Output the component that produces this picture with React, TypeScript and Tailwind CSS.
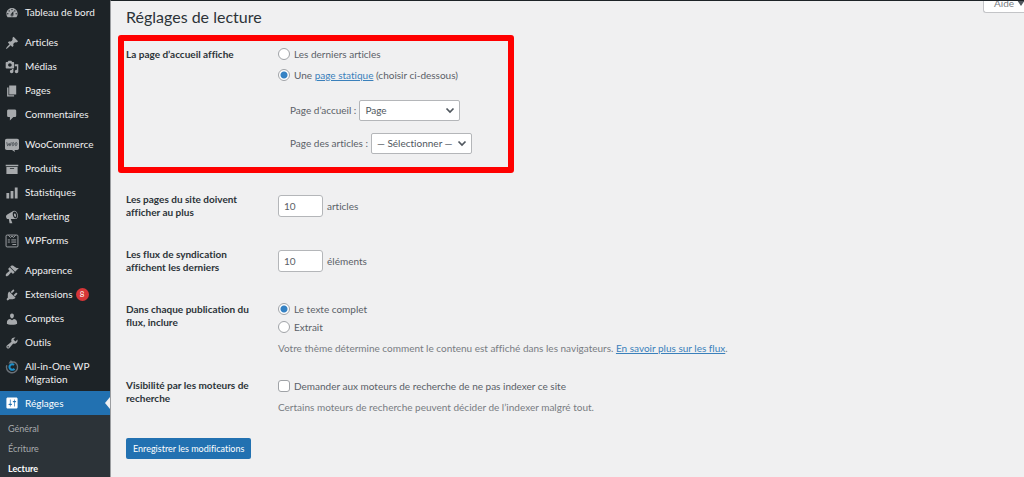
import type { ReactNode } from "react";

const icons: Record<string, ReactNode> = {
  dashboard: (
    <path d="M3.76 16h12.48c1.1-1.37 1.76-3.11 1.76-5 0-4.42-3.58-8-8-8s-8 3.58-8 8c0 1.89.66 3.63 1.76 5zM10 4c.55 0 1 .45 1 1s-.45 1-1 1-1-.45-1-1 .45-1 1-1zM6 6c.55 0 1 .45 1 1s-.45 1-1 1-1-.45-1-1 .45-1 1-1zm8 0c.55 0 1 .45 1 1s-.45 1-1 1-1-.45-1-1 .45-1 1-1zm-5.37 5.55L12 7v6c0 1.1-.9 2-2 2s-2-.9-2-2c0-.57.24-1.08.63-1.45zM4 10c.55 0 1 .45 1 1s-.45 1-1 1-1-.45-1-1 .45-1 1-1zm12 0c.55 0 1 .45 1 1s-.45 1-1 1-1-.45-1-1 .45-1 1-1zm-5 3c0-.55-.45-1-1-1s-1 .45-1 1 .45 1 1 1 1-.45 1-1z" />
  ),
  post: (
    <path d="M10.44 3.02l1.82-1.82 6.36 6.35-1.83 1.82c-1.05-.68-2.48-.57-3.41.36l-.75.75c-.92.93-1.04 2.35-.35 3.41l-1.83 1.82-2.41-2.41-2.8 2.79c-.42.42-3.38 2.71-3.8 2.29s1.86-3.39 2.28-3.81l2.79-2.79L4.1 9.36l1.83-1.82c1.05.69 2.48.57 3.4-.36l.75-.75c.93-.92 1.05-2.35.36-3.41z" />
  ),
  media: (
    <path d="M13 11V4c0-.55-.45-1-1-1h-1.67L9 1H5L3.67 3H2c-.55 0-1 .45-1 1v7c0 .55.45 1 1 1h10c.55 0 1-.45 1-1zM7 4.5c1.38 0 2.5 1.12 2.5 2.5S8.38 9.5 7 9.5 4.5 8.38 4.5 7 5.62 4.5 7 4.5zM14 6h5v10.5c0 1.38-1.12 2.5-2.5 2.5S14 17.88 14 16.5s1.12-2.5 2.5-2.5c.17 0 .34.02.5.05V9h-3V6zm-4 8.05V13h2v3.5c0 1.38-1.12 2.5-2.5 2.5S7 17.88 7 16.5 8.12 14 9.5 14c.17 0 .34.02.5.05z" />
  ),
  page: <path d="M6 15V2h10v13H6zm-1 1h8v2H3V5h2v11z" />,
  comments: (
    <path d="M5 2h9c1.1 0 2 .9 2 2v7c0 1.1-.9 2-2 2h-2l-5 5v-5H5c-1.1 0-2-.9-2-2V4c0-1.1.9-2 2-2z" />
  ),
  woo: (
    <>
      <path d="M2.5 1h15C18.900 1 20 2.100 20 3.500v11c0 1.400-1.100 2.500-2.500 2.500H13.500l.8 3-4.300-3H2.500C1.100 17 0 15.900 0 14.500v-11C0 2.100 1.100 1 2.500 1z" />
      <g fill="none" stroke="#50565c" strokeWidth="1.300" strokeLinejoin="round">
        <path d="M2.500 6l1.200 5.500L6 7.500l1 4L9 6" />
        <ellipse cx="11.500" cy="8.700" rx="1.300" ry="2.400" transform="rotate(12 11.500 8.700)" />
        <ellipse cx="15.800" cy="8.700" rx="1.300" ry="2.400" transform="rotate(12 15.800 8.700)" />
      </g>
    </>
  ),
  archive: <path d="M19 4v2H1V4h18zM2 7h16v10H2V7zm11 3V9H7v1h6z" />,
  chart: <path d="M18 18V2h-4v16h4zm-6 0V7H8v11h4zm-6 0v-8H2v8h4z" />,
  megaphone: (
    <>
      <path d="M18.15 5.94c.46 1.62.38 3.22-.02 4.48-.42 1.28-1.26 2.18-2.3 2.48-.16.06-.26.06-.4.06-.06.02-.12.02-.18.02-.06.02-.14.02-.22.02h-6.8l2.22 5.5c.02.14-.06.26-.14.34-.08.1-.24.16-.34.16H6.95c-.1 0-.26-.06-.34-.16-.08-.08-.16-.2-.14-.34l-1-5.5H4.25l-.02-.02c-.5.06-1.08-.18-1.54-.62s-.88-1.08-1.06-1.88c-.24-.8-.2-1.56-.02-2.2.18-.62.58-1.08 1.06-1.3l.02-.02 9-5.4c.1-.06.18-.1.24-.16.06-.04.14-.08.24-.12.16-.08.28-.12.5-.18 1.04-.3 2.24.1 3.22.98s1.84 2.24 2.26 3.86zm-2.58 5.98h-.02c.4-.1.74-.34 1.04-.7.58-.7.86-1.76.86-3.04 0-.64-.1-1.3-.28-1.98-.34-1.36-1.02-2.5-1.78-3.24s-1.68-1.1-2.46-.88c-.82.22-1.4.96-1.7 2-.32 1.04-.28 2.36.06 3.72.38 1.36 1 2.5 1.8 3.24.78.74 1.62 1.1 2.48.88z" />
      <ellipse cx="14.300" cy="7.500" rx="1.400" ry="2.500" transform="rotate(-15 14.300 7.500)" />
    </>
  ),
  forms: (
    <g fill="none" stroke="currentColor" strokeWidth="1.300">
      <rect x="1.500" y="1.500" width="17" height="17" rx="1.500" />
      <path d="M5 2l3 3 2-2 2 2 3-3M4 8.500h3M9 8.500h7M4 11.500h3M9 11.500h7M10.500 15h5.500" />
    </g>
  ),
  appearance: (
    <path d="M14.48 11.06L7.41 3.99l1.5-1.5c.5-.56 2.3-.47 3.51.32 1.21.8 1.43 1.28 2.91 2.1 1.18.64 2.45 1.26 4.45.85zm-.71.71L6.7 4.7 4.93 6.47c-.39.39-.39 1.02 0 1.41l1.06 1.06c.39.39.39 1.03 0 1.42-.6.6-1.43 1.11-2.21 1.69-.35.26-.7.53-1.01.84C1.43 14.23.4 16.08 1.4 17.07c.99 1 2.84-.03 4.18-1.36.31-.31.58-.66.85-1.02.57-.78 1.08-1.61 1.69-2.21.39-.39 1.02-.39 1.41 0l1.06 1.06c.39.39 1.02.39 1.41 0z" />
  ),
  plugins: (
    <path d="M13.11 4.36L9.87 7.6 8 5.73l3.24-3.24c.35-.34 1.05-.2 1.56.32.52.51.66 1.21.31 1.55zm-8 1.77l.91-1.12 9.01 9.01-1.19.84c-.71.71-2.63 1.16-3.82 1.16H6.14L4.9 17.26c-.59.59-1.54.59-2.12 0-.59-.58-.59-1.53 0-2.12l1.24-1.24v-3.88c0-1.13.4-3.19 1.09-3.89zm7.26 3.97l3.24-3.24c.34-.35 1.04-.21 1.55.31.52.51.66 1.21.31 1.55l-3.24 3.25z" />
  ),
  users: (
    <path d="M10 9.25c-2.27 0-2.73-3.44-2.73-3.44C7 4.02 7.82 2 9.97 2c2.16 0 2.98 2.02 2.71 3.81 0 0-.41 3.44-2.68 3.44zm0 2.57L12.72 10c2.39 0 4.52 2.33 4.52 4.53v2.49s-3.65 1.13-7.24 1.13c-3.65 0-7.24-1.13-7.24-1.13v-2.49c0-2.25 1.94-4.48 4.47-4.48z" />
  ),
  tools: (
    <path d="M16.68 9.77c-1.34 1.34-3.3 1.67-4.95.99l-5.41 6.52c-.99.99-2.59.99-3.58 0s-.99-2.59 0-3.57l6.52-5.42c-.68-1.65-.35-3.61.99-4.95 1.28-1.28 3.12-1.62 4.72-1.06l-2.89 2.89 2.82 2.82 2.86-2.87c.53 1.58.18 3.39-1.08 4.65zM3.81 16.21c.4.39 1.04.39 1.43 0 .4-.4.4-1.04 0-1.43-.39-.4-1.03-.4-1.43 0-.39.39-.39 1.03 0 1.43z" />
  ),
  migration: (
    <g fill="none">
      <path d="M12 2.500a8 8 0 1 1-9.500 5" stroke="#6a7178" strokeWidth="2" />
      <path d="M5 5L8 .5l5 2.500-2 2z" fill="#6a7178" />
      <path d="M13.500 12.500a4 4 0 1 1-.5-5.500" stroke="#1b8fcb" strokeWidth="3" />
    </g>
  ),
  settings: (
    <path d="M18 16V4c0-1.1-.9-2-2-2H4c-1.1 0-2 .9-2 2v12c0 1.1.9 2 2 2h12c1.1 0 2-.9 2-2zM8 11h1c.55 0 1 .45 1 1s-.45 1-1 1H8v1.5c0 .28-.22.5-.5.5s-.5-.22-.5-.5V13H6c-.55 0-1-.45-1-1s.45-1 1-1h1V5.5c0-.28.22-.5.5-.5s.5.22.5.5V11zm5-2h-1c-.55 0-1-.45-1-1s.45-1 1-1h1V5.5c0-.28.22-.5.5-.5s.5.22.5.5V7h1c.55 0 1 .45 1 1s-.45 1-1 1h-1v5.5c0 .28-.22.5-.5.5s-.5-.22-.5-.5V9z" />
  ),
};

type Item = { icon: string; label: string; badge?: number };

const groups: Item[][] = [
  [{ icon: "dashboard", label: "Tableau de bord" }],
  [
    { icon: "post", label: "Articles" },
    { icon: "media", label: "Médias" },
    { icon: "page", label: "Pages" },
    { icon: "comments", label: "Commentaires" },
  ],
  [
    { icon: "woo", label: "WooCommerce" },
    { icon: "archive", label: "Produits" },
    { icon: "chart", label: "Statistiques" },
    { icon: "megaphone", label: "Marketing" },
    { icon: "forms", label: "WPForms" },
  ],
  [
    { icon: "appearance", label: "Apparence" },
    { icon: "plugins", label: "Extensions", badge: 8 },
    { icon: "users", label: "Comptes" },
    { icon: "tools", label: "Outils" },
    { icon: "migration", label: "All-in-One WP Migration" },
  ],
];

function Icon({ name }: { name: string }) {
  return (
    <svg viewBox="0 0 20 20" className="block size-[14px] shrink-0" fill="currentColor" aria-hidden="true">
      {icons[name]}
    </svg>
  );
}

function MenuItem({ icon, label, badge }: Item) {
  return (
    <li>
      <a href="#" className="flex items-start gap-[6px] py-[5px] pl-[5px] pr-3 leading-[13px]">
        <span className="text-[#a7aaad]">
          <Icon name={icon} />
        </span>
        <span>{label}</span>
        {badge !== undefined && (
          <span className="-ml-[3px] flex size-[13px] items-center justify-center rounded-full bg-[#d63638] text-[8px] text-white">
            {badge}
          </span>
        )}
      </a>
    </li>
  );
}

function Sidebar() {
  return (
    <nav className="flex w-[110px] shrink-0 flex-col bg-[#1d2327] pt-px text-[10px] text-[#f0f0f1]">
      <div className="flex flex-col gap-[6px]">
        {groups.map((group) => (
          <ul key={group[0].label}>
            {group.map((item) => (
              <MenuItem key={item.label} {...item} />
            ))}
          </ul>
        ))}
      </div>
      <a href="#" className="relative flex h-6 items-center gap-[6px] bg-[#2271b1] pl-[5px] text-white">
        <Icon name="settings" />
        Réglages
        <svg viewBox="0 0 5 12" className="absolute right-0 top-[6px] h-3 w-[5px]" fill="#f0f0f1" aria-hidden="true">
          <path d="M5 0v12L0 6z" />
        </svg>
      </a>
      <ul className="flex flex-1 flex-col gap-[6px] bg-[#2c3338] pl-2 pt-[7px] text-[9px] leading-[14px] text-[#a7aaad]">
        <li><a href="#">Général</a></li>
        <li><a href="#">Écriture</a></li>
        <li><a href="#" className="font-bold text-white">Lecture</a></li>
      </ul>
    </nav>
  );
}

const radioClass =
  "size-3 shrink-0 appearance-none rounded-full border border-[#a0a3a7] bg-white checked:bg-[radial-gradient(circle,#3582c4_0_3px,white_4px)]";

function Choice({ name, checked, children }: { name: string; checked?: boolean; children: ReactNode }) {
  return (
    <label className="flex h-[18px] items-center gap-1">
      <input type="radio" name={name} defaultChecked={checked} className={radioClass} />
      <span>{children}</span>
    </label>
  );
}

function PageSelect({ id, label, options }: { id: string; label: string; options: string[] }) {
  return (
    <div className="flex items-center gap-[3px]">
      <label htmlFor={id}>{label}</label>
      <span className="relative flex items-center">
        <select
          id={id}
          className="h-[21px] w-[101px] appearance-none rounded-[2px] border border-[#b4b6b9] bg-white pl-[5px] pr-3 text-[10px] text-[#50575e]"
        >
          {options.map((option) => (
            <option key={option}>{option}</option>
          ))}
        </select>
        <svg
          viewBox="0 0 10 7"
          className="pointer-events-none absolute right-[5px] h-[7px] w-[10px]"
          fill="none"
          stroke="#50575e"
          strokeWidth="1.700"
          aria-hidden="true"
        >
          <path d="M1.500 1.500L5 5l3.500-3.500" />
        </svg>
      </span>
    </div>
  );
}

const gridClass = "grid grid-cols-[152px_minmax(0,1fr)]";
const headClass = "pr-6 font-bold leading-[13px] text-[#2c3338]";
const linkClass = "text-[#3a80bb] underline";

function NumberRow({ id, label, unit }: { id: string; label: string; unit: string }) {
  return (
    <div className={gridClass}>
      <label htmlFor={id} className={headClass}>{label}</label>
      <div className="flex items-center gap-1">
        <input
          id={id}
          type="text"
          inputMode="numeric"
          defaultValue="10"
          className="h-[22px] w-[45px] rounded-[3px] border border-[#b4b6b9] bg-white px-[5px] text-[10px]"
        />
        <span>{unit}</span>
      </div>
    </div>
  );
}

export default function App() {
  return (
    <div className="flex min-h-screen font-['Lato','Open_Sans',sans-serif] text-[10px] text-[#5a6067] [font-variant-ligatures:none]">
      <Sidebar />
      <main className="relative min-w-0 flex-1 overflow-hidden border-l border-t border-l-[#9b9da0] border-t-[#1d2327] bg-[#f0f0f1]">
        <div className="absolute right-0 top-0 flex h-3 w-[41px] items-end rounded-bl-[3px] border-b border-l border-[#c3c4c7] bg-white pl-[10px]">
          <button type="button" className="flex items-center gap-[3px] whitespace-nowrap pb-[2px] leading-[14px] text-[#787c82]">
            Aide
            <svg viewBox="0 0 8 6" className="h-[6px] w-2" fill="#50575e" aria-hidden="true">
              <path d="M0 0h8L4 6z" />
            </svg>
          </button>
        </div>
        <form className="px-[15px] pt-1" onSubmit={(event) => event.preventDefault()}>
          <h1 className="text-base leading-6 text-[#2c3338]">Réglages de lecture</h1>

          <section className="-ml-2 mt-[6px] max-w-[396px] rounded-[3px] border-[6px] border-[#ff0000] pb-[13px] pl-[2px] pt-1">
            <div className={gridClass}>
              <h2 className="pt-[3px] font-bold leading-[13px] text-[#2c3338]">La page d’accueil affiche</h2>
              <div>
                <div className="flex flex-col gap-[3px]">
                  <Choice name="front">Les derniers articles</Choice>
                  <Choice name="front" checked>
                    Une <a href="#" className={linkClass}>page statique</a> (choisir ci-dessous)
                  </Choice>
                </div>
                <div className="mt-4 flex flex-col gap-3 pl-3">
                  <PageSelect id="home" label="Page d’accueil :" options={["Page"]} />
                  <PageSelect id="posts" label="Page des articles :" options={["— Sélectionner —"]} />
                </div>
              </div>
            </div>
          </section>

          <div className="mt-5 flex flex-col gap-[29px]">
            <NumberRow id="per-page" label="Les pages du site doivent afficher au plus" unit="articles" />
            <NumberRow id="per-feed" label="Les flux de syndication affichent les derniers" unit="éléments" />
            <div className={gridClass}>
              <h2 className={headClass}>Dans chaque publication du flux, inclure</h2>
              <div className="-mt-[3px]">
                <Choice name="feed" checked>Le texte complet</Choice>
                <Choice name="feed">Extrait</Choice>
                <p className="mt-[5px] leading-[14px] text-[#787c82]">
                  Votre thème détermine comment le contenu est affiché dans les navigateurs.{" "}
                  <a href="#" className={linkClass}>En savoir plus sur les flux</a>.
                </p>
              </div>
            </div>
          </div>

          <div className={`${gridClass} mt-6`}>
            <h2 className={headClass}>Visibilité par les moteurs de recherche</h2>
            <div>
              <label className="flex h-[14px] items-center gap-1">
                <input type="checkbox" className="size-3 shrink-0 appearance-none rounded-[3px] border border-[#a0a3a7] bg-white" />
                <span>Demander aux moteurs de recherche de ne pas indexer ce site</span>
              </label>
              <p className="mt-[7px] leading-[14px] text-[#787c82]">
                Certains moteurs de recherche peuvent décider de l’indexer malgré tout.
              </p>
            </div>
          </div>

          <button type="submit" className="mt-6 flex h-[21px] items-center rounded-[2px] bg-[#2271b1] px-[7px] text-[9px] text-white">
            Enregistrer les modifications
          </button>
        </form>
      </main>
    </div>
  );
}
